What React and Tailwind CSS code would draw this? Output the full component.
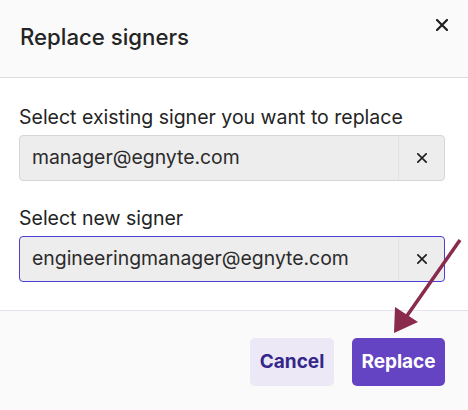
import React from 'react';

const font = { fontFamily: 'Inter, "Liberation Sans", sans-serif' };

const XIcon = ({ size = 12, stroke = 2 }) => (
  <svg width={size} height={size} viewBox="0 0 12 12" fill="none">
    <path d="M1 1L11 11M11 1L1 11" stroke="#1f1f1f" strokeWidth={stroke} strokeLinecap="square" />
  </svg>
);

const SignerField = ({ label, value, focused }) => (
  <div>
    <div className="text-[19.5px] leading-[24px] text-[#242424] mb-[6px]">{label}</div>
    <div
      className={`flex h-[46px] rounded-[4px] bg-[#ededed] border ${
        focused ? 'border-[#4b3fd6]' : 'border-[#d6d6d6]'
      }`}
    >
      <div className="flex-1 flex items-center pl-[12px] text-[19.4px] text-[#2b2b2b]">{value}</div>
      <div className="w-[46px] flex items-center justify-center border-l border-[#e2e2e2]">
        <XIcon size={10} stroke={2} />
      </div>
    </div>
  </div>
);

const App = () => {
  return (
    <div className="relative w-[468px] h-[410px] bg-white overflow-hidden" style={font}>
      {/* Header */}
      <div className="h-[78px] bg-[#fafafa] border-b border-[#dcdcdc] flex justify-between pl-[20px] pr-[20px]">
        <h1 className="text-[22.2px] font-medium text-[#242424] mt-[24px] leading-[26px]">Replace signers</h1>
        <button className="mt-[19px] h-[12px]">
          <XIcon size={12} stroke={2.2} />
        </button>
      </div>

      {/* Body */}
      <div className="h-[232px] pl-[19px] pr-[23px] pt-[27px] flex flex-col gap-[25px]">
        <SignerField label="Select existing signer you want to replace" value="manager@egnyte.com" />
        <SignerField label="Select new signer" value="engineeringmanager@egnyte.com" focused />
      </div>

      {/* Footer */}
      <div className="h-[100px] bg-[#fafafa] border-t border-[#e4e2ea] flex justify-end items-start gap-[18px] pr-[23px] pt-[27px]">
        <button className="h-[48px] w-[84px] rounded-[5px] bg-[#ece8f6] text-[#35278a] text-[19px] font-bold">
          Cancel
        </button>
        <button className="h-[48px] w-[93px] rounded-[5px] bg-[#6444c2] text-white text-[19px] font-bold">
          Replace
        </button>
      </div>

      {/* Annotation arrow */}
      <svg className="absolute left-0 top-0 pointer-events-none" width="468" height="410">
        <line x1="460" y1="240" x2="404" y2="320" stroke="#8a2a4d" strokeWidth="3.5" />
        <polygon points="394,333 395,307 418,322" fill="#8a2a4d" />
      </svg>
    </div>
  );
};

export default App;
